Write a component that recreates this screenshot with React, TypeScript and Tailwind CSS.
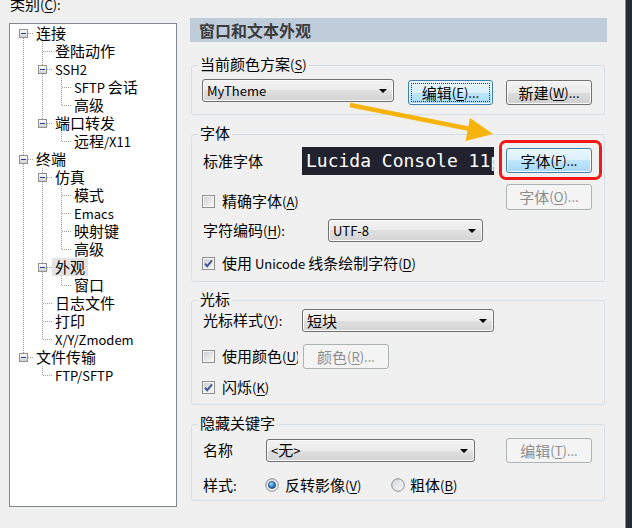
import React from 'react';

// Splits a label into CJK and Latin runs; "&X" underlines the mnemonic letter.
function Txt({ s }: { s: string }) {
  const parts = s.match(/[\x20-\x7E]+|[^\x20-\x7E]+/g) ?? [];
  return (
    <>
      {parts.map((p, i) => {
        if (/^[\x20-\x7E]/.test(p)) {
          const segs = p.split(/&(.)/);
          return (
            <span key={i} className="text-[13px]">
              {segs.map((q, j) =>
                j % 2 === 1 ? (
                  <u key={j} className="underline-offset-[2px]">
                    {q}
                  </u>
                ) : (
                  q
                )
              )}
            </span>
          );
        }
        return <span key={i}>{p}</span>;
      })}
    </>
  );
}

type Row = {
  label: string;
  lines: boolean[];
  last?: boolean;
  first?: boolean;
  box?: boolean;
  sel?: boolean;
};

const TREE: Row[] = [
  { label: '连接', lines: [], first: true, box: true },
  { label: '登陆动作', lines: [true] },
  { label: 'SSH2', lines: [true], box: true },
  { label: 'SFTP 会话', lines: [true, true] },
  { label: '高级', lines: [true, true], last: true },
  { label: '端口转发', lines: [true], last: true, box: true },
  { label: '远程/X11', lines: [true, false], last: true },
  { label: '终端', lines: [], box: true },
  { label: '仿真', lines: [true], box: true },
  { label: '模式', lines: [true, true] },
  { label: 'Emacs', lines: [true, true] },
  { label: '映射键', lines: [true, true] },
  { label: '高级', lines: [true, true], last: true },
  { label: '外观', lines: [true], box: true, sel: true },
  { label: '窗口', lines: [true, true], last: true },
  { label: '日志文件', lines: [true] },
  { label: '打印', lines: [true] },
  { label: 'X/Y/Zmodem', lines: [true], last: true },
  { label: '文件传输', lines: [], last: true, box: true },
  { label: 'FTP/SFTP', lines: [false], last: true },
];

const DOT = '#a0a0a0';

function Guide({ full }: { full: boolean }) {
  return (
    <svg width="19" height="18" className="shrink-0" shapeRendering="crispEdges">
      {full && <line x1="9.5" y1="0" x2="9.5" y2="18" stroke={DOT} strokeDasharray="1 1" />}
    </svg>
  );
}

function Joint({ first, last, box }: { first?: boolean; last?: boolean; box?: boolean }) {
  return (
    <svg width="19" height="18" className="shrink-0" shapeRendering="crispEdges">
      <defs>
        <linearGradient id="tvbox" x1="0" y1="0" x2="0" y2="1">
          <stop offset="0" stopColor="#ffffff" />
          <stop offset="1" stopColor="#cfcfcf" />
        </linearGradient>
      </defs>
      {!first && <line x1="9.5" y1="0" x2="9.5" y2="9" stroke={DOT} strokeDasharray="1 1" />}
      {!last && <line x1="9.5" y1="10" x2="9.5" y2="18" stroke={DOT} strokeDasharray="1 1" />}
      <line x1="10" y1="9.5" x2="19" y2="9.5" stroke={DOT} strokeDasharray="1 1" />
      {box && (
        <>
          <rect x="5.5" y="5.5" width="8" height="8" fill="url(#tvbox)" stroke="#919191" />
          <line x1="7" y1="9.5" x2="12" y2="9.5" stroke="#22409a" />
        </>
      )}
    </svg>
  );
}

function DownArrow() {
  return (
    <svg width="8" height="4" viewBox="0 0 8 4" className="shrink-0">
      <polygon points="0,0 8,0 4,4" fill="#000" />
    </svg>
  );
}

function Combo({ value, className = '' }: { value: string; className?: string }) {
  return (
    <div
      className={`flex items-center justify-between pl-[4px] pr-[6px] h-[23px] border border-[#707070] rounded-[3px] bg-[linear-gradient(#f2f2f2_0%,#ebebeb_50%,#e0e0e0_50%,#d3d3d3_100%)] shadow-[inset_0_0_0_1px_#fafafa] ${className}`}
    >
      <span className="leading-[18px] whitespace-nowrap">
        <Txt s={value} />
      </span>
      <DownArrow />
    </div>
  );
}

type Look = 'normal' | 'blue' | 'focus' | 'disabled';

const LOOKS: Record<Look, string> = {
  normal:
    'border-[#707070] text-black bg-[linear-gradient(#f2f2f2_0%,#ebebeb_50%,#dddddd_50%,#cfcfcf_100%)] shadow-[inset_0_0_0_1px_#fcfcfc]',
  blue:
    'border-[#3c7fb1] text-black bg-[linear-gradient(#eaf6fd_0%,#d9f0fc_50%,#bee6fd_50%,#a7d9f5_100%)] shadow-[inset_0_0_0_1px_#fcfcfc]',
  focus:
    'border-[#3c7fb1] text-black bg-[linear-gradient(#eaf6fd_0%,#d9f0fc_50%,#bee6fd_50%,#a7d9f5_100%)] shadow-[inset_0_0_0_1px_#fcfcfc] outline-1 outline-dotted outline-offset-[-4px] outline-[#5a2a10]',
  disabled: 'border-[#adb2b5] text-[#8d8d8d] bg-[#f4f4f4]',
};

function Btn({ label, look = 'normal', className = '' }: { label: string; look?: Look; className?: string }) {
  return (
    <div
      className={`flex items-center justify-center h-[25px] border rounded-[3px] leading-[18px] whitespace-nowrap ${LOOKS[look]} ${className}`}
    >
      <Txt s={label} />
    </div>
  );
}

function Check({ checked }: { checked?: boolean }) {
  return (
    <svg width="13" height="13" viewBox="0 0 13 13" className="shrink-0">
      <defs>
        <linearGradient id="cbfill" x1="0" y1="0" x2="1" y2="1">
          <stop offset="0" stopColor="#cdd0d4" />
          <stop offset="1" stopColor="#f8f8f8" />
        </linearGradient>
      </defs>
      <rect x="0.5" y="0.5" width="12" height="12" fill="#f6f6f6" stroke="#8f8f8f" />
      <rect x="2" y="2" width="9" height="9" fill="url(#cbfill)" />
      {checked && (
        <path d="M3 6.6 L5.2 9.2 L10 3.4" fill="none" stroke="#3f5595" strokeWidth="1.9" />
      )}
    </svg>
  );
}

function Radio({ checked }: { checked?: boolean }) {
  return (
    <svg width="14" height="14" viewBox="0 0 14 14" className="shrink-0">
      <defs>
        <linearGradient id="rbfill" x1="0" y1="0" x2="1" y2="1">
          <stop offset="0" stopColor="#d0d3d7" />
          <stop offset="1" stopColor="#fbfbfb" />
        </linearGradient>
        <radialGradient id="rbdot" cx="0.4" cy="0.35" r="0.7">
          <stop offset="0" stopColor="#9fe0ff" />
          <stop offset="0.5" stopColor="#3b8fd0" />
          <stop offset="1" stopColor="#14417c" />
        </radialGradient>
      </defs>
      <circle cx="7" cy="7" r="6.3" fill="url(#rbfill)" stroke="#8f8f8f" />
      {checked && <circle cx="7" cy="7" r="3.6" fill="url(#rbdot)" stroke="#1c3f6e" strokeWidth="0.6" />}
    </svg>
  );
}

function Group({ title, className = '', children }: { title: string; className?: string; children: React.ReactNode }) {
  return (
    <fieldset className={`ml-[1px] w-[414px] border border-[#d5dfe5] rounded-[3px] ${className}`}>
      <legend className="ml-[6px] px-[2px] pb-[2px] leading-[16px]">
        <Txt s={title} />
      </legend>
      {children}
    </fieldset>
  );
}

export default function App() {
  return (
    <div className="relative flex w-[632px] h-[528px] overflow-hidden bg-[#f0f0f0] text-[15px] text-black font-['Noto_Sans_CJK_SC',sans-serif]">
      {/* Category tree */}
      <div className="ml-[9px] w-[168px] flex flex-col">
        <div className="-mt-[4px] ml-[1px] leading-[16px]">
          <Txt s="类别(&C):" />
        </div>
        <div className="mt-[10px] h-[484px] border border-[#828790] bg-white pl-[4px] flex flex-col">
          {TREE.map((r, i) => (
            <div key={i} className="flex h-[18px] items-center">
              {r.lines.map((f, k) => (
                <Guide key={k} full={f} />
              ))}
              <Joint first={r.first} last={r.last} box={r.box} />
              <span className={`px-[3px] leading-[18px] whitespace-nowrap ${r.sel ? 'bg-[#e4e4e4]' : ''}`}>
                <Txt s={r.label} />
              </span>
            </div>
          ))}
        </div>
      </div>

      {/* Settings page */}
      <div className="ml-[13px] w-[417px] flex flex-col">
        <div className="mt-[18px] h-[24px] bg-[#bfcddb] pl-[9px] flex items-center text-[16px] font-bold text-[#3c3c3c]">
          窗口和文本外观
        </div>

        <Group title="当前颜色方案(&S)" className="mt-[14px]">
          <div className="flex items-start pl-[10px] pt-[4px] pb-[9px]">
            <Combo value="MyTheme" className="w-[192px]" />
            <Btn label="编辑(&E)..." look="focus" className="ml-[14px] mt-[1px] w-[85px]" />
            <Btn label="新建(&W)..." className="ml-[13px] mt-[1px] w-[86px]" />
          </div>
        </Group>

        <Group title="字体" className="mt-[10px]">
          <div className="flex pl-[10px] pt-[4px] pb-[6px]">
            <div className="w-[293px] flex flex-col">
              <div className="h-[28px] flex items-center">
                <span className="w-[100px] pl-[1px]">标准字体</span>
                <div className="w-[192px] h-[28px] bg-[#22222e] overflow-hidden whitespace-nowrap pl-[4px] text-white text-[18px] leading-[28px] font-['DejaVu_Sans_Mono',monospace]">
                  Lucida Console 11pt
                </div>
              </div>
              <div className="mt-[14px] h-[24px] flex items-center">
                <Check />
                <span className="ml-[7px]">
                  <Txt s="精确字体(&A)" />
                </span>
              </div>
              <div className="mt-[6px] h-[23px] flex items-center">
                <span className="w-[126px] pl-[1px]">
                  <Txt s="字符编码(&H):" />
                </span>
                <Combo value="UTF-8" className="w-[155px]" />
              </div>
              <div className="mt-[9px] h-[24px] flex items-center">
                <Check checked />
                <span className="ml-[7px] whitespace-nowrap">
                  <Txt s="使用 Unicode 线条绘制字符(&D)" />
                </span>
              </div>
            </div>
            <div className="ml-[11px] w-[86px] flex flex-col">
              <div className="relative mt-[1px]">
                <Btn label="字体(&F)..." look="blue" className="w-[86px]" />
                <div className="absolute -left-[7px] -top-[8px] -right-[10px] -bottom-[7px] border-[3px] border-[#f01818] rounded-[7px] pointer-events-none" />
              </div>
              <Btn label="字体(&O)..." look="disabled" className="mt-[11px] w-[86px] h-[26px]" />
            </div>
          </div>
        </Group>

        <Group title="光标" className="mt-[9px]">
          <div className="flex flex-col pl-[10px] pb-[5px]">
            <div className="h-[23px] flex items-center">
              <span className="w-[100px] pl-[1px] whitespace-nowrap">
                <Txt s="光标样式(&Y):" />
              </span>
              <Combo value="短块" className="w-[192px]" />
            </div>
            <div className="mt-[12px] h-[25px] flex items-center">
              <div className="w-[96px] flex items-center overflow-hidden whitespace-nowrap">
                <Check />
                <span className="ml-[7px]">
                  <Txt s="使用颜色(&U)" />
                </span>
              </div>
              <Btn label="颜色(&R)..." look="disabled" className="ml-[5px] w-[86px]" />
            </div>
            <div className="mt-[6px] h-[24px] flex items-center">
              <Check checked />
              <span className="ml-[7px]">
                <Txt s="闪烁(&K)" />
              </span>
            </div>
          </div>
        </Group>

        <Group title="隐藏关键字" className="mt-[10px]">
          <div className="flex flex-col pl-[10px] pt-[5px] pb-[3px]">
            <div className="h-[25px] flex items-center">
              <span className="w-[64px] pl-[1px]">名称</span>
              <Combo value="<无>" className="w-[209px]" />
              <Btn label="编辑(&T)..." look="disabled" className="ml-[31px] w-[86px]" />
            </div>
            <div className="mt-[10px] h-[24px] flex items-center">
              <span className="w-[63px] pl-[1px]">
                <Txt s="样式:" />
              </span>
              <div className="w-[126px] flex items-center">
                <Radio checked />
                <span className="ml-[6px]">
                  <Txt s="反转影像(&V)" />
                </span>
              </div>
              <Radio />
              <span className="ml-[5px]">
                <Txt s="粗体(&B)" />
              </span>
            </div>
          </div>
        </Group>
      </div>

      <div className="flex-1" />
      <div className="w-[1px] bg-[#45a0dc]" />
      <div className="w-[6px] bg-[#262a33]" />

      {/* Yellow annotation arrow */}
      <svg className="absolute inset-0 pointer-events-none" width="632" height="528">
        <line x1="350" y1="105" x2="469" y2="128.8" stroke="#f6b30c" strokeWidth="4.5" />
        <polygon points="493,134 470,118 465.5,141" fill="#f6b30c" />
      </svg>
    </div>
  );
}
